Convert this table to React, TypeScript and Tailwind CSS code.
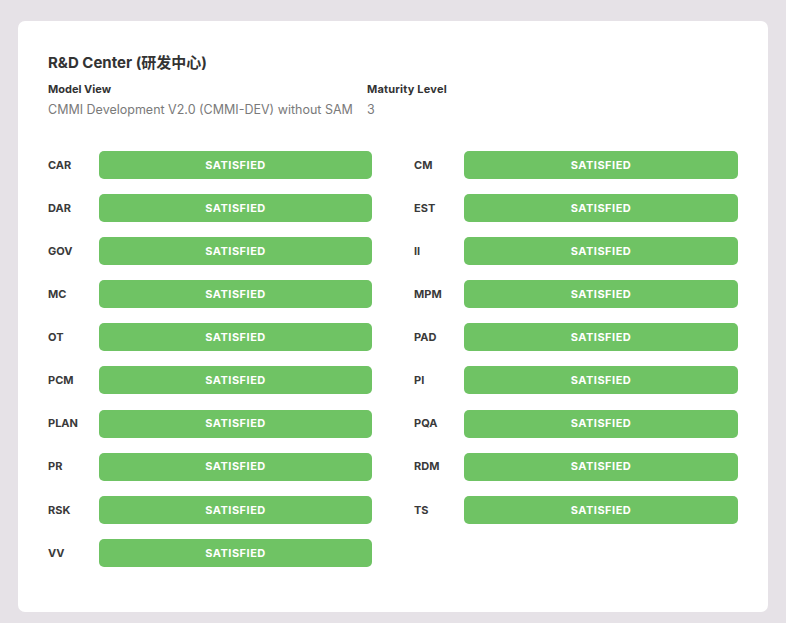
import React from "react";

const left = ["CAR", "DAR", "GOV", "MC", "OT", "PCM", "PLAN", "PR", "RSK", "VV"];
const right = ["CM", "EST", "II", "MPM", "PAD", "PI", "PQA", "RDM", "TS"];

function Row({ name, labelW }: { name: string; labelW: string }) {
  return (
    <div className="flex items-center h-[28px]">
      <div className={`${labelW} shrink-0 text-[11px] font-bold text-[#3a3a3a]`}>{name}</div>
      <div className="flex-1 h-[28px] rounded-[5px] bg-[#6fc364] flex items-center justify-center text-[11px] font-bold text-white tracking-[0.5px]">
        SATISFIED
      </div>
    </div>
  );
}

export default function App() {
  return (
    <div
      className="w-[786px] h-[623px] bg-[#e6e2e7] pt-[21px] pl-[18px]"
      style={{ fontFamily: "Inter, 'Noto Sans CJK SC', sans-serif" }}
    >
      <div className="w-[750px] h-[591px] bg-white rounded-[7px] px-[30px] pt-[32px]">
        <h1 className="text-[15px] font-bold text-[#333] leading-[20px]">R&amp;D Center (研发中心)</h1>
        <div className="flex mt-[9px]">
          <div className="w-[319px]">
            <div className="text-[11px] font-bold text-[#333] leading-[14px]">Model View</div>
            <div className="text-[12.5px] text-[#7a7a7a] mt-[5px] leading-[18px]">
              CMMI Development V2.0 (CMMI-DEV) without SAM
            </div>
          </div>
          <div>
            <div className="text-[11px] font-bold text-[#333] leading-[14px] tracking-[0.2px]">Maturity Level</div>
            <div className="text-[12.5px] text-[#7a7a7a] mt-[5px] leading-[18px]">3</div>
          </div>
        </div>
        <div className="grid grid-cols-2 gap-x-[42px] mt-[32px]">
          <div className="flex flex-col gap-[15.1px]">
            {left.map((n) => (
              <Row key={n} name={n} labelW="w-[51px]" />
            ))}
          </div>
          <div className="flex flex-col gap-[15.1px]">
            {right.map((n) => (
              <Row key={n} name={n} labelW="w-[50px]" />
            ))}
          </div>
        </div>
      </div>
    </div>
  );
}
